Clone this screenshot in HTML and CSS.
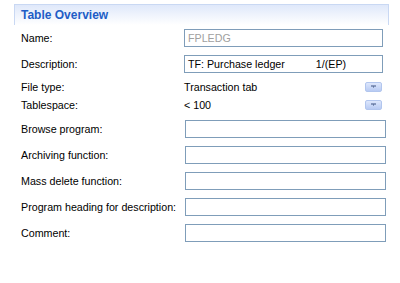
FILE: index.html
```html
<!DOCTYPE html>
<html lang="en">
<head>
    <meta charset="UTF-8">
    <title>Table Overview</title>
    <link rel="stylesheet" href="styles.css">
</head>
<body>
    <div class="section">
        <!-- section title -->
        <div class="section-head">Table Overview</div>

        <div class="form">
            <div class="row">
                <div class="label">Name:</div>
                <div class="field field-top readonly">FPLEDG</div>
            </div>
            <div class="row">
                <div class="label">Description:</div>
                <div class="field field-top">TF: Purchase ledger<span class="suffix">1/(EP)</span></div>
            </div>

            <!-- dropdowns -->
            <div class="row row-combo first-combo">
                <div class="label">File type:</div>
                <div class="combo">
                    <span>Transaction tab</span>
                    <span class="combo-btn"><svg width="7" height="4" viewBox="0 0 7 4"><path d="M1 1h5M3 2h1" stroke="#3d5280" stroke-width="1"/></svg></span>
                </div>
            </div>
            <div class="row row-combo">
                <div class="label">Tablespace:</div>
                <div class="combo">
                    <span>&lt; 100</span>
                    <span class="combo-btn"><svg width="7" height="4" viewBox="0 0 7 4"><path d="M1 1h5M3 2h1" stroke="#3d5280" stroke-width="1"/></svg></span>
                </div>
            </div>

            <div class="row first-empty">
                <div class="label">Browse program:</div>
                <div class="field"></div>
            </div>
            <div class="row">
                <div class="label">Archiving function:</div>
                <div class="field"></div>
            </div>
            <div class="row">
                <div class="label">Mass delete function:</div>
                <div class="field"></div>
            </div>
            <div class="row">
                <div class="label">Program heading for description:</div>
                <div class="field"></div>
            </div>
            <div class="row">
                <div class="label">Comment:</div>
                <div class="field"></div>
            </div>
        </div>
    </div>
</body>
</html>
```

FILE: styles.css
```css
body{
    margin: 0;
    background-color: #fff;
    font-family: "Liberation Sans", Arial, sans-serif;
    font-size: 10.7px;
    color: #000;
}
/* 섹션 제목 */
.section-head{
    margin: 4px 11px 0 14px;
    height: 20px;
    padding-left: 6px;
    line-height: 20px;
    border: 1px solid #c9d8f3;
    border-bottom: none;
    background: linear-gradient(#dfe8fa, #ffffff);
    color: #215dc6;
    font-size: 12px;
    font-weight: bold;
}
.form{
    padding: 4px 0 0 21px;
}
.row{
    display: flex;
    align-items: center;
    height: 18px;
    margin-bottom: 8px;
}
.label{
    width: 163px;
    flex-shrink: 0;
}
.field{
    box-sizing: border-box;
    width: 201px;
    height: 18px;
    margin-left: 1px;
    padding-left: 3px;
    border: 1px solid #7f9db9;
    background-color: #fff;
    line-height: 16px;
    white-space: nowrap;
}
.field-top{
    width: 199px;
    margin-left: 0;
}
.readonly{
    color: #a0a0a0;
}
.suffix{
    margin-left: 31px;
}
/* 콤보박스 */
.row-combo{
    margin-bottom: 0;
}
.first-combo{
    margin-top: -3px;
}
.first-empty{
    margin-top: 6px;
}
.combo{
    display: flex;
    align-items: center;
    justify-content: space-between;
    width: 198px;
}
.combo-btn{
    box-sizing: border-box;
    width: 17px;
    height: 10px;
    display: flex;
    align-items: center;
    justify-content: center;
    border: 1px solid #b2c6ee;
    border-radius: 2px;
    background: linear-gradient(#dde7fc, #b8cbf3);
}
```
